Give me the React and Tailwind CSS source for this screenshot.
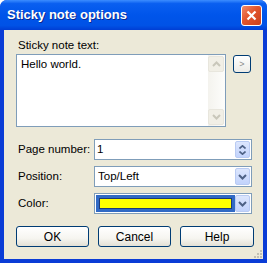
import React from "react";

const XpButton = ({ children, className = "" }) => (
  <button
    className={`h-[21px] rounded-[3px] border border-[#003c74] bg-[linear-gradient(180deg,#ffffff_0%,#f6f5f0_60%,#e3e0d5_100%)] text-[12px] text-black leading-none ${className}`}
  >
    {children}
  </button>
);

const DropButton = () => (
  <div className="w-[15px] h-[17px] rounded-[2px] border border-[#b9cbf3] bg-[linear-gradient(180deg,#dce6fd_0%,#c2d3fc_100%)] flex items-center justify-center">
    <svg width="9" height="6" viewBox="0 0 9 6">
      <path d="M1 1 L4.5 4.5 L8 1" stroke="#4d6185" strokeWidth="2" fill="none" />
    </svg>
  </div>
);

const ScrollArrow = ({ up }) => (
  <div className="w-[16px] h-[16px] rounded-[2px] border border-[#e8e6dd] bg-[#f1efe6] flex items-center justify-center">
    <svg width="9" height="6" viewBox="0 0 9 6">
      <path
        d={up ? "M1 5 L4.5 1.5 L8 5" : "M1 1 L4.5 4.5 L8 1"}
        stroke="#c9c7ba"
        strokeWidth="2"
        fill="none"
      />
    </svg>
  </div>
);

export default function App() {
  return (
    <div
      className="w-[267px] h-[263px] flex flex-col rounded-t-[7px] overflow-hidden bg-[#0a3cd6] whitespace-nowrap"
      style={{ fontFamily: "'Liberation Sans', Arial, sans-serif" }}
    >
      {/* title bar */}
      <div className="h-[30px] shrink-0 flex items-center justify-between pl-[7px] pr-[5px] bg-[linear-gradient(180deg,#3c8dff_0%,#0a5ff0_12%,#0055ea_50%,#0052e6_85%,#003ed4_100%)]">
        <span className="text-white font-bold text-[13px] [text-shadow:1px_1px_0_#0b2a90]">
          Sticky note options
        </span>
        <div className="w-[21px] h-[21px] rounded-[3px] border border-white bg-[linear-gradient(135deg,#f08a6a_0%,#e2552d_45%,#c9401c_100%)] flex items-center justify-center">
          <svg width="11" height="11" viewBox="0 0 11 11">
            <path d="M1.5 1.5 L9.5 9.5 M9.5 1.5 L1.5 9.5" stroke="white" strokeWidth="2.2" />
          </svg>
        </div>
      </div>

      {/* client area */}
      <div className="relative flex-1 mx-[4px] mb-[4px] bg-[#ece9d8] pl-[12px] pt-[9px] flex flex-col text-[11.5px] text-black">
        <div className="leading-[13px] pl-[2px]">Sticky note text:</div>

        <div className="mt-[2px] flex items-start gap-[7px]">
          <div className="w-[210px] h-[73px] border border-[#7f9db9] bg-white flex">
            <div className="flex-1 pl-[4px] pt-[3px] leading-[13px]">Hello world.</div>
            <div className="w-[17px] flex flex-col justify-between py-[1px] bg-[linear-gradient(90deg,#f4f3ee,#fdfdfb)]">
              <ScrollArrow up />
              <ScrollArrow />
            </div>
          </div>
          <button className="mt-[1px] w-[18px] h-[18px] rounded-[3px] border border-[#003c74] bg-[linear-gradient(180deg,#ffffff,#ecebe6)] text-[9px] leading-none text-[#8a8a8a] flex items-center justify-center">
            &gt;
          </button>
        </div>

        <div className="mt-[12px] flex flex-col gap-[6px]">
          <div className="flex items-center">
            <span className="w-[78px] pl-[2px]">Page number:</span>
            <div className="w-[158px] h-[21px] border border-[#7f9db9] bg-white flex items-center justify-between pl-[2px] pr-[1px]">
              <span>1</span>
              <div className="w-[15px] h-[17px] rounded-[2px] border border-[#b9cbf3] bg-[linear-gradient(180deg,#dce6fd_0%,#c2d3fc_100%)] flex flex-col items-center justify-center gap-[2px]">
                <svg width="7" height="4" viewBox="0 0 7 4">
                  <path d="M0.5 3.5 L3.5 0.8 L6.5 3.5" stroke="#4d6185" strokeWidth="1.6" fill="none" />
                </svg>
                <svg width="7" height="4" viewBox="0 0 7 4">
                  <path d="M0.5 0.5 L3.5 3.2 L6.5 0.5" stroke="#4d6185" strokeWidth="1.6" fill="none" />
                </svg>
              </div>
            </div>
          </div>

          <div className="flex items-center">
            <span className="w-[78px] pl-[2px]">Position:</span>
            <div className="w-[158px] h-[21px] border border-[#7f9db9] bg-white flex items-center justify-between pl-[3px] pr-[1px]">
              <span>Top/Left</span>
              <DropButton />
            </div>
          </div>

          <div className="flex items-center">
            <span className="w-[78px] pl-[2px]">Color:</span>
            <div className="w-[158px] h-[21px] border border-[#7f9db9] bg-white flex items-center justify-between pl-[1px] pr-[1px]">
              <div className="w-[139px] h-[17px] bg-[#316ac5] p-[3px]">
                <div className="w-full h-full bg-[#ffff00] border border-[#1e3a78]" />
              </div>
              <DropButton />
            </div>
          </div>
        </div>

        <div className="mt-[12px] flex gap-[9px]">
          <XpButton className="w-[73px]">OK</XpButton>
          <XpButton className="w-[73px]">Cancel</XpButton>
          <XpButton className="w-[74px]">Help</XpButton>
        </div>

        {/* resize grip */}
        <svg className="absolute right-[1px] bottom-[1px]" width="10" height="10" viewBox="0 0 10 10">
          {[
            [8, 2], [8, 5], [8, 8], [5, 5], [5, 8], [2, 8],
          ].map(([x, y], i) => (
            <rect key={i} x={x} y={y} width="2" height="2" fill="#c1bfb3" />
          ))}
        </svg>
      </div>
    </div>
  );
}
